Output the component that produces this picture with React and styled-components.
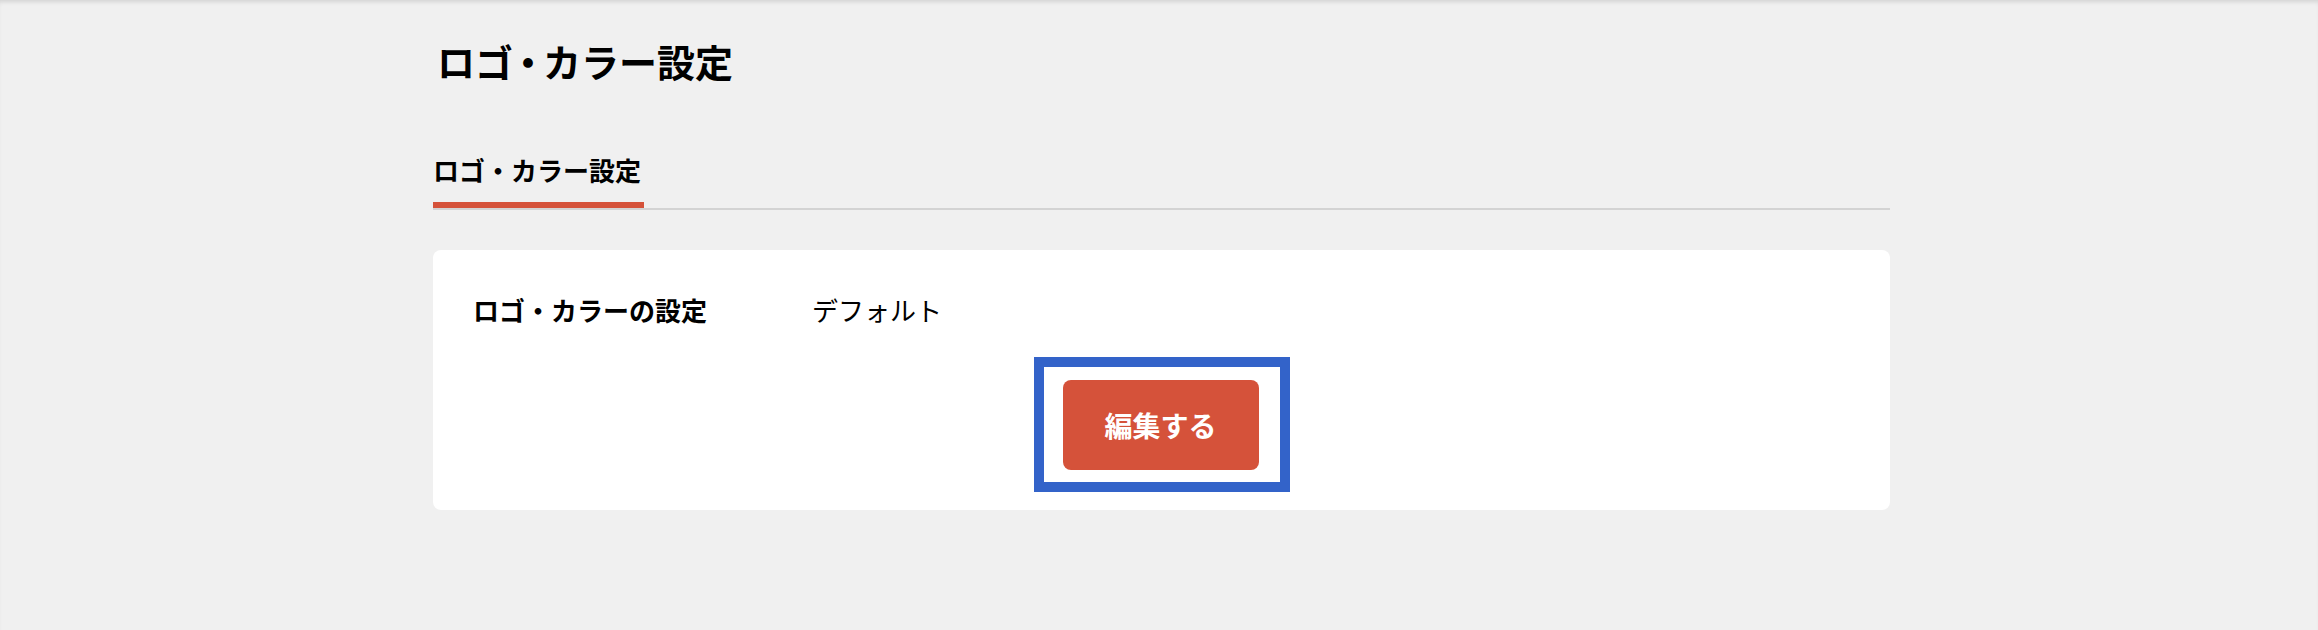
import React from 'react';
import styled, { createGlobalStyle } from 'styled-components';

const GlobalStyle = createGlobalStyle`
    html, body {
        margin: 0;
        padding: 0;
        background: #f0f0f0;
    }
    body {
        font-family: "Noto Sans CJK JP", "Noto Sans", sans-serif;
        color: #000;
    }
`

const Page = styled.div`
    min-height: 100vh;
    box-sizing: border-box;
    padding-top: 37px;
    background: #f0f0f0;
    box-shadow: inset 0 4px 4px -2px rgba(0, 0, 0, 0.12);
`

const Container = styled.div`
    width: 1457px;
    margin-left: calc(50% - 726px);
`

const Title = styled.h1`
    margin: 0;
    padding-left: 4px;
    font-size: 38px;
    line-height: 48px;
    font-weight: 700;
`

const Dot = styled.span`
    margin: 0 -4px;
`

const TabList = styled.div`
    display: flex;
    margin-top: 67px;
    border-bottom: 2px solid #d3d3d3;
`

const Tab = styled.div`
    font-size: 26px;
    line-height: 36px;
    font-weight: 700;
    padding: 0 3px 14px 0;
    border-bottom: 6px solid ${(p) => (p.active ? '#d5523a' : 'transparent')};
`

const Card = styled.div`
    margin-top: 40px;
    background: #fff;
    border-radius: 8px;
    padding: 44px 40px 18px;
`

const Row = styled.div`
    display: grid;
    grid-template-columns: 339px 1fr;
    font-size: 26px;
    line-height: 32px;
`

const Label = styled.div`
    font-weight: 700;
`

const Value = styled.div`
    font-weight: 400;
`

const Actions = styled.div`
    display: flex;
    justify-content: center;
    margin-top: 31px;
`

const Highlight = styled.div`
    border: 10px solid #3363c9;
    padding: 13px 21px 12px 19px;
`

const Button = styled.button`
    width: 196px;
    height: 90px;
    border: none;
    border-radius: 8px;
    background: #d5523a;
    color: #fff;
    font-family: inherit;
    font-size: 28px;
    font-weight: 700;
    cursor: pointer;
`

function App() {
    return (
        <>
            <GlobalStyle />
            <Page>
                <Container>
                    <Title>ロゴ<Dot>・</Dot>カラー設定</Title>
                    <TabList>
                        <Tab active>ロゴ・カラー設定</Tab>
                    </TabList>
                    <Card>
                        <Row>
                            <Label>ロゴ・カラーの設定</Label>
                            <Value>デフォルト</Value>
                        </Row>
                        <Actions>
                            <Highlight>
                                <Button>編集する</Button>
                            </Highlight>
                        </Actions>
                    </Card>
                </Container>
            </Page>
        </>
    )
}

export default App
